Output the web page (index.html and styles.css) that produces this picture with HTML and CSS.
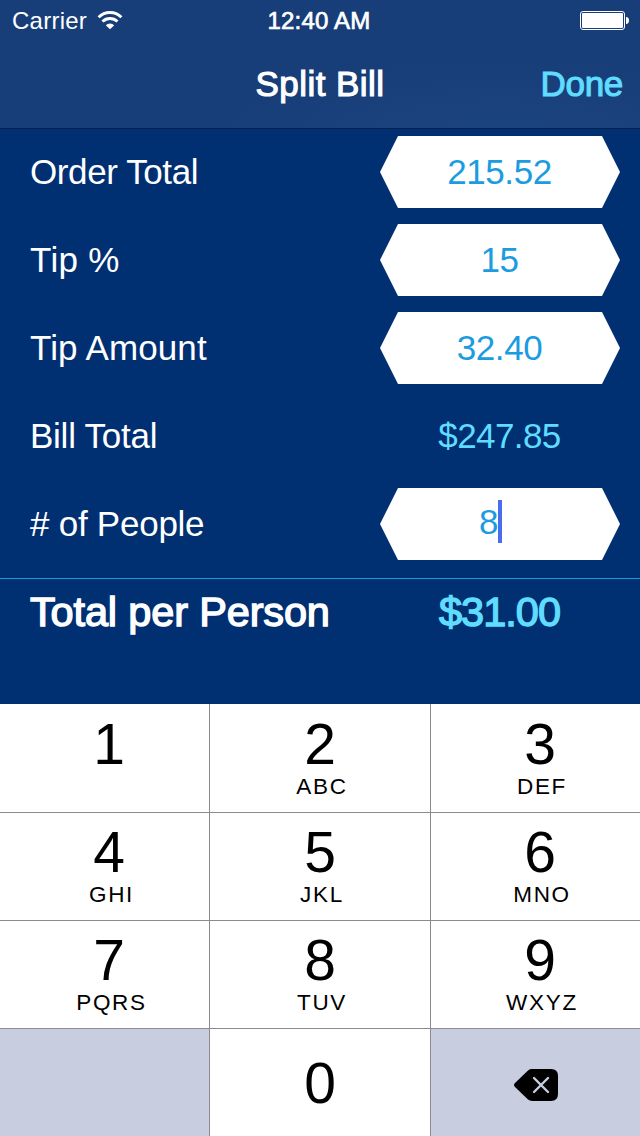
FILE: index.html
```html
<!DOCTYPE html>
<html lang="en">
<head>
<meta charset="utf-8">
<title>Split Bill</title>
<link rel="stylesheet" href="styles.css">
</head>
<body>
<main class="screen">
  <header class="top">
    <div class="status">
      <div class="status-left">
        <span class="carrier">Carrier</span>
        <svg class="wifi" width="26" height="19" viewBox="0 0 26 19">
          <path d="M1.600 6.200A16.200 16.200 0 0 1 24.400 6.200" fill="none" stroke="#fff" stroke-width="3"/>
          <path d="M5.500 10.500A10.800 10.800 0 0 1 20.500 10.500" fill="none" stroke="#fff" stroke-width="2.900"/>
          <path d="M8.800 14.200A6 6 0 0 1 17.200 14.200L13 18.200Z" fill="#fff"/>
        </svg>
      </div>
      <span class="clock">12:40 AM</span>
      <svg class="battery" width="49" height="19" viewBox="0 0 49 19">
        <rect x=".5" y=".5" width="44" height="18" rx="2.5" fill="none" stroke="#fff"/>
        <rect x="2" y="2" width="41" height="15" rx="1" fill="#fff"/>
        <path d="M46 6C48.200 6 49 7.500 49 9.500S48.200 13 46 13Z" fill="#fff"/>
      </svg>
    </div>
    <div class="nav">
      <span class="title">Split Bill</span>
      <span class="done">Done</span>
    </div>
  </header>
  <section class="form">
    <div class="row"><span class="label l-order">Order Total</span><span class="field">215.52</span></div>
    <div class="row"><span class="label l-tip">Tip %</span><span class="field">15</span></div>
    <div class="row"><span class="label l-amount">Tip Amount</span><span class="field">32.40</span></div>
    <div class="row"><span class="label l-bill">Bill Total</span><span class="value">$247.85</span></div>
    <div class="row"><span class="label l-people"># of People</span><span class="field editing"><span class="digit">8</span><i class="caret"></i></span></div>
  </section>
  <section class="total"><span class="total-label">Total per Person</span><span class="total-value">$31.00</span></section>
  <section class="keypad">
    <div class="key left"><b>1</b></div>
    <div class="key"><b>2</b><small>ABC</small></div>
    <div class="key right"><b>3</b><small>DEF</small></div>
    <div class="key left"><b>4</b><small>GHI</small></div>
    <div class="key"><b>5</b><small>JKL</small></div>
    <div class="key right"><b>6</b><small>MNO</small></div>
    <div class="key left"><b>7</b><small>PQRS</small></div>
    <div class="key"><b>8</b><small>TUV</small></div>
    <div class="key right"><b>9</b><small>WXYZ</small></div>
    <div class="key blank"></div>
    <div class="key zero"><b>0</b></div>
    <div class="key blank delete">
      <svg width="44" height="32" viewBox="0 0 44 32">
        <path d="M14 1.400Q15.800 0 18 0H37Q44 0 44 7V25Q44 32 37 32H18Q15.800 32 14 30.600L1 18Q-1 16 1 14Z" fill="#000"/>
        <path d="M20 9L34 23M34 9L20 23" stroke="#c8cde0" stroke-width="2.400" stroke-linecap="round"/>
      </svg>
    </div>
  </section>
</main>
</body>
</html>
```
FILE: styles.css
```css
* { box-sizing: border-box; }
body { margin: 0; background: #002f72; }
.screen {
  width: 640px;
  height: 1136px;
  display: flex;
  flex-direction: column;
  overflow: hidden;
  color: #fff;
  background: #002f72;
  font-family: "Liberation Sans", Arial, sans-serif;
  white-space: nowrap;
}
.top {
  height: 129px;
  border-bottom: 1px solid #02214f;
  background: radial-gradient(ellipse 280px 75px at 500px 135px, #1c447e, #173e78);
}
.status {
  height: 40px;
  padding: 0 11px 0 12px;
  display: grid;
  grid-template-columns: 1fr auto 1fr;
  align-items: center;
  line-height: 40px;
}
.status-left { display: flex; align-items: center; gap: 10px; margin-top: -1px; }
.wifi { margin-top: 1px; }
.carrier { font-size: 24px; letter-spacing: .25px; margin-top: 2px; }
.clock { font-size: 24px; -webkit-text-stroke: .7px #fff; letter-spacing: .2px; margin: 1px 0 0 -3px; }
.battery { justify-self: end; margin-top: 0; }
.nav {
  height: 88px;
  padding: 0 17px 0 0;
  display: grid;
  grid-template-columns: 1fr 128px 1fr;
  align-items: center;
  font-size: 35px;
}
.title { grid-column: 2; -webkit-text-stroke: 1.1px #fff; letter-spacing: .45px; margin-left: 8px; }
.done { justify-self: end; color: #5fdcff; -webkit-text-stroke: 1.1px #5fdcff; letter-spacing: -.3px; }
.form { height: 449px; margin-top: -1px; }
.row {
  height: 88px;
  padding: 0 20px 0 30px;
  display: flex;
  align-items: center;
  justify-content: space-between;
  font-size: 35px;
}
.label { margin-top: -1px; }
.l-order { letter-spacing: -.4px; }
.l-tip { letter-spacing: .3px; }
.l-amount { letter-spacing: .1px; }
.l-bill { letter-spacing: -.25px; }
.l-people { letter-spacing: -.25px; }
.field {
  width: 240px;
  height: 72px;
  padding: 0 1px 1px 0;
  display: flex;
  align-items: center;
  justify-content: center;
  color: #1b9ce0;
  background: #fff;
  letter-spacing: -.4px;
  clip-path: polygon(18px 0, 222px 0, 100% 50%, 222px 100%, 18px 100%, 0 50%);
}
.caret { width: 4px; height: 43px; background: #4a6df0; margin-top: -4px; }
.digit { margin-top: -3px; }
.editing { padding-right: 19px; }
.value { width: 240px; padding-right: 1px; text-align: center; color: #5fdcff; letter-spacing: -.6px; }
.total {
  height: 126px;
  margin-top: 1px;
  padding: 0 20px 0 30px;
  border-top: 1px solid #1b9ce0;
  display: flex;
  justify-content: space-between;
  font-size: 41.5px;
  line-height: 66px;
}
.total-label { -webkit-text-stroke: 1.4px #fff; letter-spacing: -.15px; }
.total-value { width: 240px; padding-right: 1px; text-align: center; color: #5fdcff; -webkit-text-stroke: 1.4px #5fdcff; letter-spacing: -1px; }
.keypad {
  height: 432px;
  display: grid;
  grid-template-columns: 209px 220px 209px;
  grid-template-rows: 108px 107px 107px 107px;
  gap: 1px;
  background: #8c8c8e;
  color: #000;
}
.key { display: flex; flex-direction: column; align-items: center; padding-top: 7px; background: #fff; }
.left, .right { padding-left: 9px; }
.key:nth-child(-n+3) { padding-top: 8px; }
.key b { font-weight: 400; font-size: 57px; line-height: 64px; }
.key small { font-size: 22.5px; line-height: 22px; letter-spacing: 1.7px; margin-right: -4px; }
.left small { margin-right: -5px; }
.key.zero { padding-top: 22px; }
.blank { background: #c8cde0; }
.key.delete { padding: 5px 0 0 1px; justify-content: center; }
```
